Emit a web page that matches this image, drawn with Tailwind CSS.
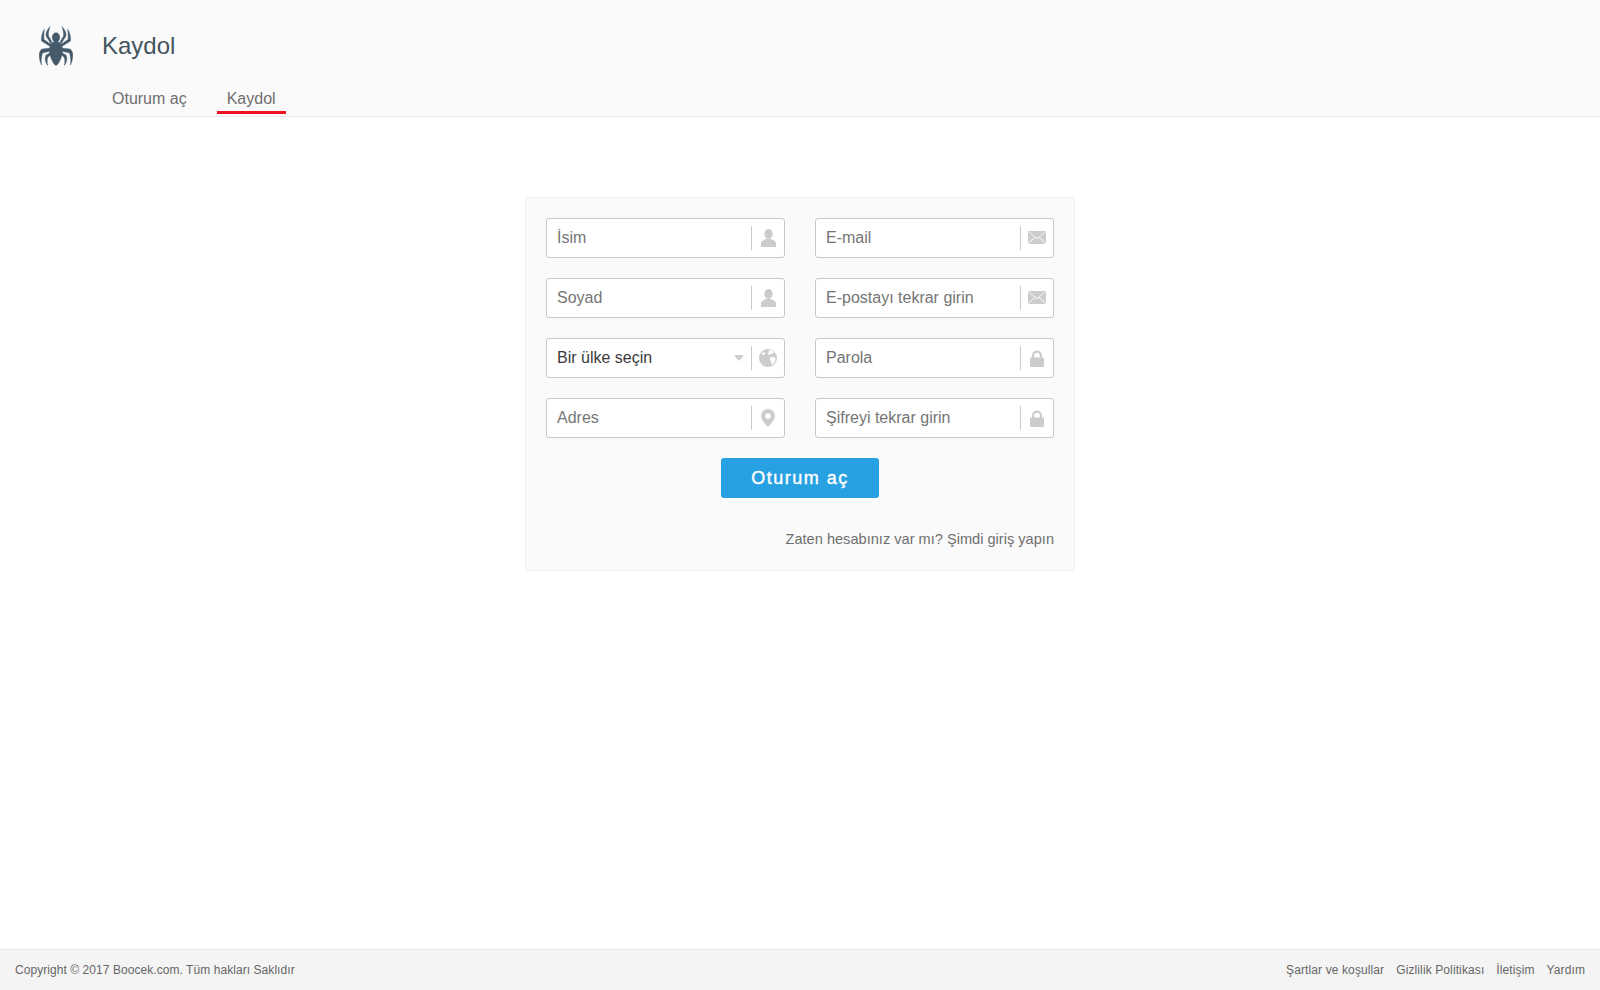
<!DOCTYPE html>
<html lang="tr">
<head>
<meta charset="UTF-8">
<title>Kaydol</title>
<script src="https://cdn.jsdelivr.net/npm/@tailwindcss/browser@4"></script>
</head>
<body class="bg-white font-['Liberation_Sans',Arial,sans-serif]">
<div class="flex flex-col h-[990px] w-full overflow-hidden">

  <!-- header -->
  <header class="h-[117px] shrink-0 bg-[#fafafa] border-b border-[#e8e8e8] flex flex-col">
    <div class="flex items-center h-[82px] pl-[39px] pt-[10px]">
      <svg class="w-[34px] h-[40px] text-[#44596a]" viewBox="0 0 34 40" fill="currentColor" stroke="currentColor" stroke-width=".4">
        <ellipse cx="17" cy="11.500" rx="3.800" ry="4.800"/>
        <path d="M17 15.500c4 0 6.500 3.500 6.500 8.500 0 7-4.500 15.500-6.500 15.500S10.500 31 10.500 24c0-5 2.500-8.500 6.500-8.500z"/>
        <path d="M11 .5C8 4 6.500 7 7 10l5 8 1-2-3.500-6C9 7 10 4 11 .5z"/>
        <path d="M23 .5C26 4 27.500 7 27 10l-5 8-1-2 3.500-6C25 7 24 4 23 .5z"/>
        <path d="M5.500 3C3 7 2 11 2.500 15l9.500 6 1-2-8-5.500C4.500 10 5 6 5.500 3z"/>
        <path d="M28.500 3C31 7 32 11 31.500 15L22 21l-1-2 8-5.500C29.500 10 29 6 28.500 3z"/>
        <path d="M12 22l-9 1C.5 25-.2 28 .3 31c.3 3 1.200 6 2.200 8-.5-4-.3-8 1-12l8.500-2z"/>
        <path d="M22 22l9 1c2.500 2 3.200 5 2.700 8-.3 3-1.200 6-2.200 8 .5-4 .3-8-1-12L22 25z"/>
        <path d="M12.500 26L7 29c-1.500 3-1 7 1.500 10.500-.5-3.500-.5-6.500.5-8.500l4-3z"/>
        <path d="M21.500 26l5.500 3c1.500 3 1 7-1.500 10.500.5-3.500.5-6.500-.5-8.500l-4-3z"/>
      </svg>
      <h1 class="ml-[29px] text-[24px] leading-none text-[#44545f]">Kaydol</h1>
    </div>
    <nav class="flex pl-[102px] h-[34px] text-[16px] text-[#6f6f6f]">
      <a class="px-[10px] pt-[5px] mr-[20px]">Oturum aç</a>
      <a class="px-[10px] pt-[5px] h-[32px] border-b-[3px] border-[#ee1122]">Kaydol</a>
    </nav>
  </header>

  <!-- form -->
  <main class="flex-1 flex justify-center pt-[80px]">
    <form class="w-[550px] h-[374px] bg-[#fafafa] border border-[#eeeeee] rounded-[4px] p-[20px]">
      <div class="grid grid-cols-[239px_239px] gap-x-[30px] gap-y-[20px]">

        <div class="h-[40px] bg-white border border-[#c8c8c8] rounded-[3px] flex items-center pl-[10px] text-[16px] text-[#757575]">
          <span class="flex-1">İsim</span>
          <span class="w-px h-[24px] bg-[#cccccc]"></span>
          <span class="w-[32px] flex justify-center">
            <svg class="w-[15px] h-[18px] text-[#cccccc]" viewBox="0 0 15 18" fill="currentColor"><ellipse cx="7.500" cy="5" rx="4.200" ry="5"/><path d="M0 18v-3.800c0-2 2.800-3 5-4.200l5 0c2.200 1.200 5 2.200 5 4.200V18z"/></svg>
          </span>
        </div>

        <div class="h-[40px] bg-white border border-[#c8c8c8] rounded-[3px] flex items-center pl-[10px] text-[16px] text-[#757575]">
          <span class="flex-1">E-mail</span>
          <span class="w-px h-[24px] bg-[#cccccc]"></span>
          <span class="w-[32px] flex justify-center">
            <svg class="w-[18px] h-[13px] -mt-[1px] text-[#cccccc]" viewBox="0 0 18 13" fill="currentColor"><path d="M0 0h18L9 7.200z"/><path d="M0 .8V12.500l6.500-6.400z"/><path d="M18 .8V12.500l-6.500-6.400z"/><path d="M.5 13l6.500-6.400L9 8.200l2-1.600L17.500 13z"/></svg>
          </span>
        </div>

        <div class="h-[40px] bg-white border border-[#c8c8c8] rounded-[3px] flex items-center pl-[10px] text-[16px] text-[#757575]">
          <span class="flex-1">Soyad</span>
          <span class="w-px h-[24px] bg-[#cccccc]"></span>
          <span class="w-[32px] flex justify-center">
            <svg class="w-[15px] h-[18px] text-[#cccccc]" viewBox="0 0 15 18" fill="currentColor"><ellipse cx="7.500" cy="5" rx="4.200" ry="5"/><path d="M0 18v-3.800c0-2 2.800-3 5-4.200l5 0c2.200 1.200 5 2.200 5 4.200V18z"/></svg>
          </span>
        </div>

        <div class="h-[40px] bg-white border border-[#c8c8c8] rounded-[3px] flex items-center pl-[10px] text-[16px] text-[#757575]">
          <span class="flex-1">E-postayı tekrar girin</span>
          <span class="w-px h-[24px] bg-[#cccccc]"></span>
          <span class="w-[32px] flex justify-center">
            <svg class="w-[18px] h-[13px] -mt-[1px] text-[#cccccc]" viewBox="0 0 18 13" fill="currentColor"><path d="M0 0h18L9 7.200z"/><path d="M0 .8V12.500l6.500-6.400z"/><path d="M18 .8V12.500l-6.500-6.400z"/><path d="M.5 13l6.500-6.400L9 8.200l2-1.600L17.500 13z"/></svg>
          </span>
        </div>

        <div class="h-[40px] bg-white border border-[#c8c8c8] rounded-[3px] flex items-center pl-[10px] text-[16px] text-[#3a3a3a]">
          <span class="flex-1">Bir ülke seçin</span>
          <span class="w-0 h-0 mr-[7px] border-x-[5px] border-x-transparent border-t-[6px] border-t-[#cccccc]"></span>
          <span class="w-px h-[24px] bg-[#cccccc]"></span>
          <span class="w-[32px] flex justify-center">
            <svg class="w-[18px] h-[18px] text-[#cccccc]" viewBox="0 0 18 18"><circle cx="9" cy="9" r="9" fill="currentColor"/><path fill="#fff" d="M10 1.200l3.500.3 1.500 2-2 1.500-1.500-.5-.5 1.500-2-1 .5-1.500zM11.500 8l3 .2 2 .8-.3 3-2 3-1.500.5-.5-3-1.500-2zM3 4l2.500-1 .5 1.500L4.500 6 3 5.500z"/></svg>
          </span>
        </div>

        <div class="h-[40px] bg-white border border-[#c8c8c8] rounded-[3px] flex items-center pl-[10px] text-[16px] text-[#757575]">
          <span class="flex-1">Parola</span>
          <span class="w-px h-[24px] bg-[#cccccc]"></span>
          <span class="w-[32px] flex justify-center">
            <svg class="w-[14px] h-[17px] text-[#cccccc]" viewBox="0 0 14 17" fill="currentColor"><path d="M2 8V5.500a5 5 0 0 1 10 0V8H9.800V5.500a2.800 2.800 0 0 0-5.600 0V8z"/><rect y="7.500" width="14" height="9.500" rx="1"/></svg>
          </span>
        </div>

        <div class="h-[40px] bg-white border border-[#c8c8c8] rounded-[3px] flex items-center pl-[10px] text-[16px] text-[#757575]">
          <span class="flex-1">Adres</span>
          <span class="w-px h-[24px] bg-[#cccccc]"></span>
          <span class="w-[32px] flex justify-center">
            <svg class="w-[14px] h-[18px] text-[#cccccc]" viewBox="0 0 14 18"><path fill="currentColor" fill-rule="evenodd" d="M7 0a7 7 0 0 1 7 7c0 3.500-4 8-7 11-3-3-7-7.500-7-11a7 7 0 0 1 7-7zm0 4.200a2.800 2.800 0 1 0 0 5.600 2.800 2.800 0 0 0 0-5.600z"/></svg>
          </span>
        </div>

        <div class="h-[40px] bg-white border border-[#c8c8c8] rounded-[3px] flex items-center pl-[10px] text-[16px] text-[#757575]">
          <span class="flex-1">Şifreyi tekrar girin</span>
          <span class="w-px h-[24px] bg-[#cccccc]"></span>
          <span class="w-[32px] flex justify-center">
            <svg class="w-[14px] h-[17px] text-[#cccccc]" viewBox="0 0 14 17" fill="currentColor"><path d="M2 8V5.500a5 5 0 0 1 10 0V8H9.800V5.500a2.800 2.800 0 0 0-5.600 0V8z"/><rect y="7.500" width="14" height="9.500" rx="1"/></svg>
          </span>
        </div>
      </div>

      <button type="button" class="block mx-auto mt-[20px] w-[158px] h-[40px] bg-[#27a1e1] rounded-[3px] text-white text-[18px] tracking-[1.5px] [-webkit-text-stroke:0.4px_white]">Oturum aç</button>
      <p class="mt-[31px] text-right text-[14.600px] leading-[20px] text-[#6f6f6f]">Zaten hesabınız var mı? Şimdi giriş yapın</p>
    </form>
  </main>

  <!-- footer -->
  <footer class="h-[41px] shrink-0 bg-[#f4f4f4] border-t border-[#e6e6e6] flex items-center justify-between px-[15px] text-[12px] text-[#666666]">
    <span class="tracking-[0.06px]">Copyright © 2017 Boocek.com. Tüm hakları Saklıdır</span>
    <div class="flex gap-x-[12px] tracking-[0.11px]">
      <a>Şartlar ve koşullar</a>
      <a>Gizlilik Politikası</a>
      <a>İletişim</a>
      <a>Yardım</a>
    </div>
  </footer>
</div>
</body>
</html>
